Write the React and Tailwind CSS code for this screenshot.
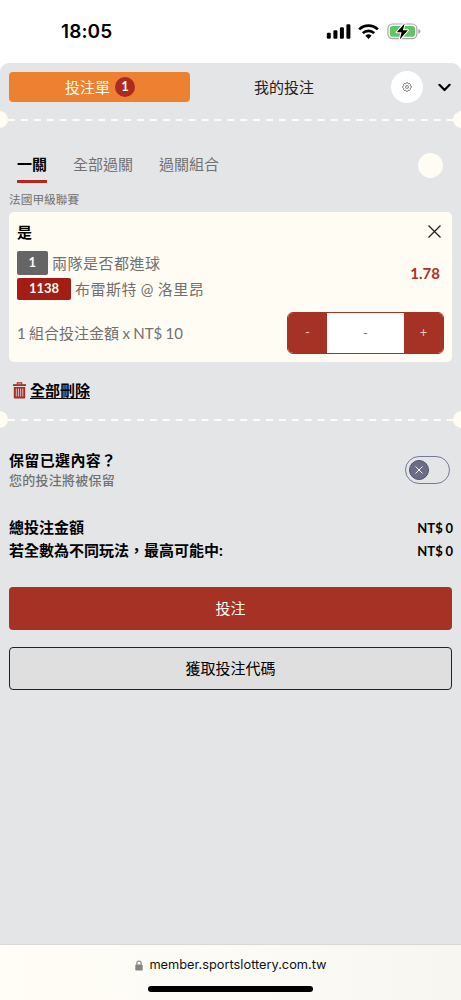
import React, { useState } from "react";
import clsx from "clsx";

const TABS = ["一關", "全部過關", "過關組合"];

const StatusBar = () => {
  return (
    <div className="flex h-[63px] shrink-0 items-center justify-between bg-white pl-[61px] pr-[40px] font-['Inter',sans-serif]">
      <span className="text-[19px] leading-6 font-semibold tracking-[0.1px] text-black">
        18:05
      </span>
      <div className="flex items-center">
        <svg width="25" height="16" viewBox="0 0 25 16" fill="#000">
          <rect x="0.8" y="8.8" width="4" height="6" rx="1.2" />
          <rect x="7.4" y="6.3" width="4" height="8.5" rx="1.2" />
          <rect x="13.9" y="3.2" width="4" height="11.6" rx="1.2" />
          <rect x="20.4" y="0.2" width="4" height="14.6" rx="1.2" />
        </svg>
        <svg
          className="ml-[7px]"
          width="21"
          height="16"
          viewBox="0 0 21 16"
          fill="none"
          stroke="#000"
          strokeWidth="2.7"
        >
          <path d="M1.2 5.4a13.4 13.4 0 0 1 18.6 0" />
          <path d="M4.8 9.1a8.2 8.2 0 0 1 11.4 0" />
          <path
            d="M7.4 11.8a4.5 4.5 0 0 1 6.2 0L10.5 14.9Z"
            fill="#000"
            stroke="none"
          />
        </svg>
        <svg
          className="ml-[8px]"
          width="34"
          height="18"
          viewBox="0 0 34 18"
          fill="none"
        >
          <rect
            x="0.9"
            y="1"
            width="29"
            height="14.6"
            rx="4.6"
            stroke="#a8a8a8"
            strokeWidth="1.2"
          />
          <path
            d="M31.4 5.9c1.5.5 2.1 1.4 2.1 2.4s-.6 1.9-2.1 2.4z"
            fill="#a8a8a8"
          />
          <rect x="2.8" y="2.9" width="25.2" height="10.8" rx="2.8" fill="#62c466" />
          <path
            d="M17.6.4 9.8 9.2h4.8l-1.8 7.2 8-9.1h-4.9z"
            fill="#000"
            stroke="#fff"
            strokeWidth="2.2"
            strokeLinejoin="round"
            paintOrder="stroke"
          />
        </svg>
      </div>
    </div>
  );
};

const GearIcon = () => (
  <svg
    className="-mt-px"
    width="10"
    height="10"
    viewBox="0 0 20 20"
    fill="none"
    stroke="#555"
    strokeWidth="1.6"
    strokeLinejoin="round"
  >
    <path d="M7.8 3.2 8.8 1.4h2.4l1 1.8 1 .4 2-.5 1.7 1.7-.5 2 .4 1 1.8 1v2.4l-1.8 1-.4 1 .5 2-1.7 1.7-2-.5-1 .4-1 1.8H8.8l-1-1.8-1-.4-2 .5-1.7-1.7.5-2-.4-1-1.8-1V8.8l1.8-1 .4-1-.5-2 1.7-1.7 2 .5z" />
    <rect x="7.4" y="7.4" width="5.2" height="5.2" rx="1.6" />
  </svg>
);

// perforated ticket edge: a dashed line with a notch at each end
const Divider = () => (
  <div className="flex h-[17px] shrink-0 items-center overflow-hidden">
    <span className="-ml-[9px] h-[17px] w-[17px] shrink-0 rounded-full bg-[#fffcf3]" />
    <svg className="h-[3px] min-w-0 flex-1" width="445" height="3">
      <line
        x1="0"
        y1="2"
        x2="445"
        y2="2"
        stroke="#fffcf3"
        strokeWidth="2"
        strokeDasharray="7 5.9"
      />
    </svg>
    <span className="-mr-[9px] h-[17px] w-[17px] shrink-0 rounded-full bg-[#fffcf3]" />
  </div>
);

const TrashIcon = () => (
  <svg width="13" height="17" viewBox="0 0 13 17" fill="none">
    <path d="M4.3 2.6V.9h4.4v1.7" stroke="#ad2a20" strokeWidth="1.1" />
    <path d="M0 2.2h13v1.8H0z" fill="#ad2a20" />
    <path
      d="M.8 5h11.4v10.2c0 .8-.5 1.3-1.3 1.3H2.1c-.8 0-1.3-.5-1.3-1.3z"
      fill="#ad2a20"
    />
    <path
      d="M3.3 6.5v8M5.45 6.5v8M7.6 6.5v8M9.75 6.5v8"
      stroke="#e4e5e7"
      strokeWidth="0.8"
    />
  </svg>
);

const BetCard = () => {
  return (
    <div className="mx-[9px] h-[150px] shrink-0 rounded-[5px] bg-[#fffcf3] pr-[8px] pl-[8px]">
      <div className="flex h-[38px] items-center justify-between">
        <span className="mt-[2px] text-[15px] font-bold text-black">是</span>
        <svg
          className="mr-[3px]"
          width="13"
          height="13"
          viewBox="0 0 13 13"
          stroke="#222"
          strokeWidth="1.3"
        >
          <path d="M.5.5l12 12M12.5.5l-12 12" />
        </svg>
      </div>
      <div className="flex items-center justify-between">
        <div className="text-[15px] tracking-[0.5px] text-[#717171]">
          <div className="flex h-[26px] items-center">
            <span className="flex h-[24px] w-[31px] items-center justify-center rounded-[2px] bg-[#656565] text-[13px] font-bold text-[#fffcf3]">
              1
            </span>
            <span className="ml-[4px]">兩隊是否都進球</span>
          </div>
          <div className="flex h-[26px] items-center">
            <span className="flex h-[22px] w-[54px] items-center justify-center rounded-[2px] bg-[#a31d14] text-[13px] font-bold tracking-normal text-[#fffcf3]">
              1138
            </span>
            <span className="ml-[4px] [word-spacing:-0.5px]">
              布雷斯特 @ 洛里昂
            </span>
          </div>
        </div>
        <span className="mr-[4px] mb-[6px] text-[15px] font-bold text-[#ad3125]">
          1.78
        </span>
      </div>
      <div className="mt-[10px] flex h-[42px] items-center justify-between">
        <span className="text-[15px] text-[#717171] [word-spacing:-0.5px]">
          1 組合投注金額 x NT$ 10
        </span>
        <div className="flex h-[42px] w-[157px] overflow-hidden rounded-[6px] border border-[#a63125] bg-white">
          <button className="w-[39px] bg-[#a63125] text-[13px] text-[#e8c6bf]">
            -
          </button>
          <span className="flex flex-1 items-center justify-center pt-px text-[13px] text-[#777]">
            -
          </span>
          <button className="w-[39px] bg-[#a63125] text-[13px] text-[#e8c6bf]">
            +
          </button>
        </div>
      </div>
    </div>
  );
};

const App = () => {
  const [activeTab, setActiveTab] = useState(0);

  return (
    <div className="flex h-[1000px] w-[461px] flex-col overflow-hidden bg-white font-['Lato','Noto_Sans_CJK_TC',sans-serif]">
      <StatusBar />

      <main className="flex min-h-0 flex-1 flex-col rounded-t-[9px] bg-[#e4e5e7]">
        <div className="flex h-[48px] shrink-0 items-center pl-[9px]">
          <button className="flex h-[30px] w-[181px] items-center justify-center rounded-[4px] bg-[#ee8031] pl-px text-[15px] text-[#fffcf3]">
            投注單
            <span className="ml-[5px] flex h-[20px] w-[20px] items-center justify-center rounded-full bg-[#ad2a20] text-[13px] font-bold">
              1
            </span>
          </button>
          <button className="ml-[64px] text-[15px] text-[#222]">我的投注</button>
          <button className="ml-[77px] flex h-[32px] w-[32px] items-center justify-center rounded-full bg-white">
            <GearIcon />
          </button>
          <svg
            className="ml-[15px]"
            width="13"
            height="9"
            viewBox="0 0 13 9"
            fill="none"
            stroke="#000"
            strokeWidth="2.2"
            strokeLinecap="round"
            strokeLinejoin="round"
          >
            <path d="M1.4 1.8 6.5 7l5.1-5.2" />
          </svg>
        </div>

        <Divider />

        <div className="mt-[19px] flex h-[36px] shrink-0 items-center justify-between pr-[18px] pl-[17px]">
          <div className="flex gap-[26px]">
            {TABS.map((tab, i) => (
              <button
                key={tab}
                onClick={() => setActiveTab(i)}
                className={clsx(
                  "flex h-[36px] items-center border-b-[3px] pt-[2px] text-[15px]",
                  i === activeTab
                    ? "border-[#b7261e] font-bold text-black"
                    : "border-transparent text-[#717171]"
                )}
              >
                {tab}
              </button>
            ))}
          </div>
          <span className="h-[25px] w-[25px] rounded-full bg-[#fffcf3]" />
        </div>

        <div className="mt-[6px] flex h-[23px] shrink-0 items-center pb-[2px] pl-[9px] text-[11.7px] text-[#717171]">
          法國甲級聯賽
        </div>
        <BetCard />

        <button className="mt-[16px] flex h-[24px] shrink-0 items-center pl-[13px]">
          <TrashIcon />
          <span className="ml-[4px] text-[15px] font-bold text-black underline underline-offset-2">
            全部刪除
          </span>
        </button>
        <div className="h-[9px] shrink-0" />
        <Divider />

        <div className="mt-[22px] flex h-[40px] shrink-0 items-center justify-between pr-[11px] pl-[9px]">
          <div>
            <p className="text-[15px] leading-[21px] font-bold tracking-[0.35px] text-black">
              保留已選內容？
            </p>
            <p className="text-[13px] leading-[19px] font-medium tracking-[0.25px] text-[#717171]">
              您的投注將被保留
            </p>
          </div>
          <button className="flex h-[28px] w-[45px] items-center rounded-full border border-[#77779a] pl-[3px]">
            <span className="flex h-[20px] w-[20px] items-center justify-center rounded-full border border-[#51516e] bg-[#6c6c87]">
              <svg width="8" height="8" viewBox="0 0 8 8" stroke="#f5f5fa">
                <path d="M.5.5l7 7M7.5.5l-7 7" />
              </svg>
            </span>
          </button>
        </div>

        <div className="mt-[26px] shrink-0 pr-[8px] pl-[9px] font-bold text-black">
          <div className="flex h-[23px] items-center justify-between">
            <span className="text-[15px]">總投注金額</span>
            <span className="mt-[3px] text-[13px] [word-spacing:-0.4px]">
              NT$ 0
            </span>
          </div>
          <div className="flex h-[23px] items-center justify-between">
            <span className="text-[15px]">若全數為不同玩法，最高可能中:</span>
            <span className="mt-[3px] text-[13px] [word-spacing:-0.4px]">
              NT$ 0
            </span>
          </div>
        </div>

        <button className="mx-[9px] mt-[25px] h-[43px] shrink-0 rounded-[4px] bg-[#a63125] text-[15px] text-[#fffcf3]">
          投注
        </button>
        <button className="mx-[9px] mt-[17px] h-[43px] shrink-0 rounded-[4px] border border-[#222] bg-[#dfdfdf] text-[15px] text-black">
          獲取投注代碼
        </button>
      </main>

      <footer className="flex h-[56px] shrink-0 flex-col items-center border-t border-[#d8d8d6] bg-linear-to-r from-[#fffdf5] via-[#fcfbf5] to-[#f7f6f0] font-['Inter',sans-serif]">
        <div className="mt-[10px] flex h-[20px] items-center pl-px text-[12.8px] text-[#111]">
          <svg
            className="mr-[6px]"
            width="8"
            height="11"
            viewBox="0 0 8 11"
            fill="none"
          >
            <rect x="0.3" y="4.6" width="7.4" height="6" rx="1.2" fill="#858585" />
            <path
              d="M1.9 5V3.1a2.1 2.1 0 0 1 4.2 0V5"
              stroke="#858585"
              strokeWidth="1.1"
            />
          </svg>
          member.sportslottery.com.tw
        </div>
        <div className="mt-[11px] h-[6px] w-[165px] rounded-full bg-black" />
      </footer>
    </div>
  );
};

export default App;
